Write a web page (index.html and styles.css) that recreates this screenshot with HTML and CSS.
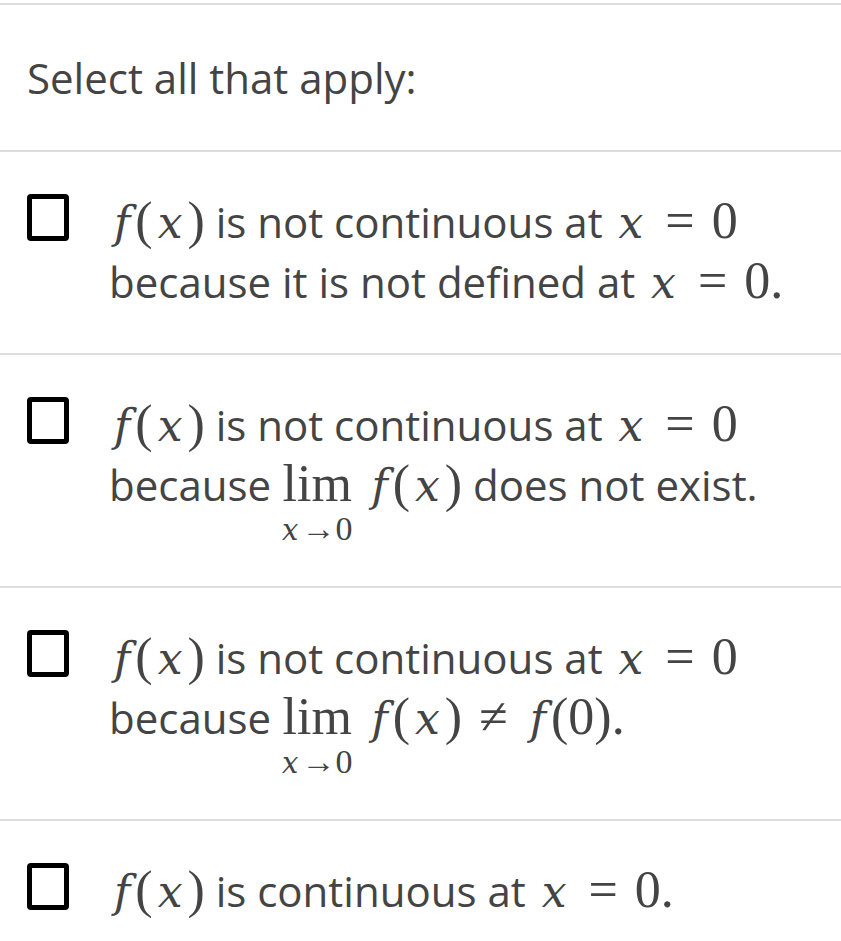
FILE: index.html
```html
<!DOCTYPE html>
<html lang="en">
<head>
    <meta charset="UTF-8">
    <meta name="viewport" content="width=device-width, initial-scale=1.0">
    <title>Select all that apply</title>
    <link rel="stylesheet" href="styles.css">
</head>

<body>
    <div class="question">
        <!-- Prompt -->
        <div class="prompt">Select all that apply:</div>

        <!-- Choices -->
        <ul class="choices">
            <li class="choice">
                <span class="box"></span>
                <div class="label">
                    <span class="math"><span class="mi">f</span>(<span class="mi">x</span>)</span> is not continuous at <span class="math"><span class="mi">x</span><span class="op">=</span>0</span><br>
                    because it is not defined at <span class="math"><span class="mi">x</span><span class="op">=</span>0.</span>
                </div>
            </li>
            <li class="choice">
                <span class="box"></span>
                <div class="label">
                    <span class="math"><span class="mi">f</span>(<span class="mi">x</span>)</span> is not continuous at <span class="math"><span class="mi">x</span><span class="op">=</span>0</span><br>
                    because <span class="math"><span class="lim"><span class="lim-name">lim</span><span class="under"><span class="mi">x</span>→0</span></span><span class="mi">f</span>(<span class="mi">x</span>)</span> does not exist.
                </div>
            </li>
            <li class="choice">
                <span class="box"></span>
                <div class="label">
                    <span class="math"><span class="mi">f</span>(<span class="mi">x</span>)</span> is not continuous at <span class="math"><span class="mi">x</span><span class="op">=</span>0</span><br>
                    because <span class="math"><span class="lim"><span class="lim-name">lim</span><span class="under"><span class="mi">x</span>→0</span></span><span class="mi">f</span>(<span class="mi">x</span>)<span class="op">≠</span><span class="mi">f</span>(0).</span>
                </div>
            </li>
            <li class="choice">
                <span class="box"></span>
                <div class="label">
                    <span class="math"><span class="mi">f</span>(<span class="mi">x</span>)</span> is continuous at <span class="math"><span class="mi">x</span><span class="op">=</span>0.</span>
                </div>
            </li>
        </ul>
    </div>
</body>
</html>
```

FILE: styles.css
```css
/* styles.css */
body {
    margin: 0;
    padding: 0;
    background-color: #fff;
    font-family: "Open Sans", Arial, sans-serif;
    color: #444;
}

.question {
    margin-top: 3px;
    border-top: 2px solid #ddd;
}

.prompt {
    font-size: 42px;
    line-height: 60px;
    padding: 43px 27px 42px;
    border-bottom: 2px solid #ddd;
}

.choices {
    list-style-type: none;
    margin: 0;
    padding: 0;
}

.choice {
    display: flex;
    align-items: flex-start;
    padding: 40px 27px 41px;
    border-bottom: 2px solid #ddd;
}

.choice:last-child {
    border-bottom: none;
}

.box {
    flex: none;
    width: 32px;
    height: 37px;
    border: 5px solid #000;
    border-radius: 4px;
    margin-top: 2px;
    margin-right: 40px;
}

.label {
    font-size: 42px;
    line-height: 60px;
}

.math {
    font-family: "Liberation Serif", "Times New Roman", serif;
    font-size: 52px;
    line-height: 1;
    white-space: nowrap;
}

.mi {
    font-family: "DejaVu Serif", "Liberation Serif", serif;
    font-style: italic;
    font-size: 44px;
    padding: 0 5px;
}

.op {
    padding: 0 17px;
}

.lim {
    display: inline-flex;
    flex-direction: column;
    align-items: center;
    margin-right: 14px;
}

.lim-name {
    line-height: 1;
}

.under {
    margin-top: 9px;
    padding-bottom: 5px;
    font-size: 34px;
    line-height: 20px;
}

.under .mi {
    font-size: 29px;
    padding: 0 3px 0 0;
}
```
